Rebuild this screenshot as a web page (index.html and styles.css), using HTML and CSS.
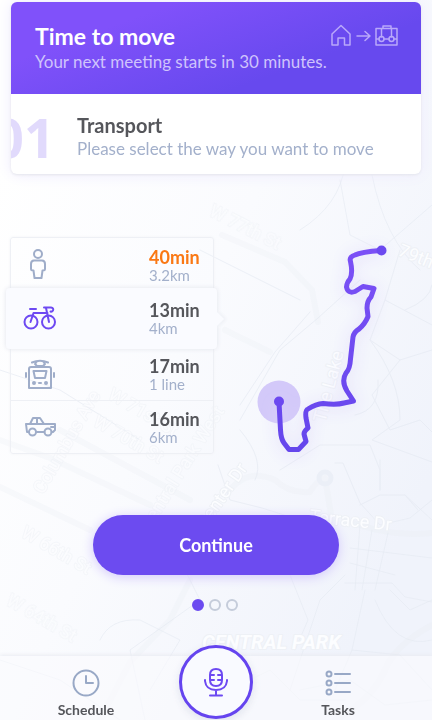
FILE: index.html
```html
<!DOCTYPE html>
<html lang="en">
<head>
<meta charset="utf-8">
<meta name="viewport" content="width=device-width, initial-scale=1">
<title>Time to move</title>
<link rel="stylesheet" href="styles.css">
</head>
<body>
<div class="app">
  <svg class="map" viewBox="0 0 432 720" preserveAspectRatio="xMidYMid slice" aria-hidden="true">
    <g class="roads roads-wide">
      <path d="M222 235L285 262L312 290L318 322M0 440L50 458L150 505M0 487L90 530M60 430L190 500M225 330L270 352M230 490Q248 468 275 480Q290 494 310 492Q315 482 325 478L332 520M345 520Q390 538 432 533M100 720L130 662L170 620L190 580M335 720Q372 700 385 670Q395 645 432 625"/>
    </g>
    <circle class="plaza" cx="325" cy="478" r="6"/>
    <g class="roads">
      <path d="M0 370L60 390L140 440M200 250L300 300M340 180L350 235L380 250L432 205M372 175Q385 240 420 270M300 230Q340 205 345 165M240 420L280 350L318 318L360 280M240 405L275 352L310 312M400 250L385 300L432 325M385 300L370 340L400 360L432 350M400 360L372 395L390 430L420 420L432 432M370 340Q400 380 400 420L372 440L432 462M355 415Q380 410 378 380M405 310Q430 300 432 285M240 430Q265 460 255 480M280 470L320 445L370 445L380 470V490"/>
      <path d="M218 465L230 500L262 508L300 520M335 463H343L360 503L380 525L410 518L432 500M380 460V490M360 505L380 495H405L432 520M405 495L418 510M360 525L355 590M372 530L362 590M388 533L375 590M350 548L432 558M350 563L395 575M345 583H392L405 597L432 602M345 575L320 600L290 690M290 575L308 620L295 650M365 590L352 650L335 690M375 600Q395 650 432 640M352 650L400 655L432 690M390 590L410 610L432 600M300 690L350 680L385 705L432 700M180 560L200 600L130 650L145 720M100 640Q110 618 140 620L180 640L150 690M0 660L60 680L120 720M230 690L270 670L300 700L345 700"/>
    </g>
    <g class="map-text">
      <g class="streets">
        <text transform="translate(208 215) rotate(27)">W 77th St</text>
        <text transform="translate(43 495) rotate(-60)">Columbus Ave</text>
        <text transform="translate(92 425) rotate(30)">W 70th St</text>
        <text transform="translate(107 398) rotate(30)">W 71st St</text>
        <text transform="translate(149 532) rotate(-58)">Central Park West</text>
        <text transform="translate(20 536) rotate(30)">W 66th St</text>
        <text transform="translate(5 604) rotate(30)">W 64th St</text>
      </g>
      <text transform="translate(397 255) rotate(22)">79th St</text>
      <text transform="translate(325 423) rotate(-75)">The Lake</text>
      <text transform="translate(205 530) rotate(-55)">Center Dr</text>
      <text transform="translate(309 522) rotate(6)">Terrace Dr</text>
      <text class="park" x="202" y="649">CENTRAL PARK</text>
    </g>
  </svg>

  <header class="card">
    <div class="banner">
      <div>
        <h1>Time to move</h1>
        <p>Your next meeting starts in 30 minutes.</p>
      </div>
      <svg class="trip" viewBox="0 0 68 24" role="img" aria-label="From home to work">
        <path d="M1 10L10 1.500L19 10V21H13.500V14H7V21H1ZM26 12H39M34 7.500L39 12L34 16.500M45 4.500H66V21H45ZM52 4.500V2H60V4.500M50.500 4.500V13M60.500 4.500V13M45 15H48M53 15H58M63 15H66"/>
        <circle cx="50.500" cy="15" r="2.500"/><circle cx="60.500" cy="15" r="2.500"/>
      </svg>
    </div>
    <div class="step">
      <span class="step-number">01</span>
      <div>
        <h2>Transport</h2>
        <p>Please select the way you want to move</p>
      </div>
    </div>
  </header>

  <main>
    <section class="planner">
      <div class="modes">
        <button class="mode late" type="button">
          <svg viewBox="0 0 34 32"><circle cx="15" cy="5" r="4"/><path d="M11 11.500H19Q22 11.500 22 15V20Q22 21.500 19.500 21.500L18.500 29H11.500L10.500 21.500Q8 21.500 8 20V15Q8 11.500 11 11.500Z"/></svg>
          <span class="figures"><strong>40min</strong><small>3.2km</small></span>
        </button>
        <button class="mode selected" type="button" aria-pressed="true">
          <svg viewBox="0 0 34 32"><circle cx="8" cy="19" r="6.500"/><circle cx="25.500" cy="19" r="6.500"/><path d="M7.500 19L10.500 10H24.500M7 6H13M21 4.500H28Q31 5 30 7.500Q29 9 27.500 8.500M23 5L26 19"/></svg>
          <span class="figures"><strong>13min</strong><small>4km</small></span>
        </button>
        <button class="mode" type="button">
          <svg viewBox="0 0 34 32"><path d="M9 3.500Q17 0 25 3.500M14 2.500L12 5L14 7H20L22 5L20 2.500M8 8H26Q28 8 28 10V29H6V10Q6 8 8 8ZM10.500 12H23.500L22 19H12ZM3 14V18M31 14V18M16 24H18"/><circle cx="11" cy="24" r="1"/><circle cx="23" cy="24" r="1"/></svg>
          <span class="figures"><strong>17min</strong><small>1 line</small></span>
        </button>
        <button class="mode" type="button">
          <svg viewBox="0 0 34 32"><circle cx="9.500" cy="21" r="3.500"/><circle cx="25" cy="21" r="3.500"/><path d="M6 21H4L3 13H7L10 7H17L21 13H32V19L30 21H28.500M13 21H21.500M8 13H21M14 7V13M32 16H28"/></svg>
          <span class="figures"><strong>16min</strong><small>6km</small></span>
        </button>
      </div>
      <svg class="route" viewBox="0 0 192 240" role="img" aria-label="Route on the map">
        <defs><linearGradient id="route-colour" x1="0" y1="0" x2="0" y2="1"><stop offset="0" stop-color="#7b50f6"/><stop offset="1" stop-color="#6546ec"/></linearGradient></defs>
        <circle class="halo" cx="39" cy="172" r="21.500"/>
        <path class="line" d="M39 172L40.500 200Q41 209 44 213L49 219.500H58.500L66 211.500L64 204Q64 201 68 198L66 188Q65 180 68 179Q76 174 83 173.500Q97 175 104 173L113.500 171L107 161Q101 151 106 143Q110 139 110.500 129L113 107Q114 102 119 99Q125 94 128 86.500L127 78Q127 71 131 67L134 58.500L123 56.500L115 61.500Q108 64 106.500 57Q107 52 110 49Q113 43 110.500 31.500Q109 27 115 25Q121 22 141 20.500"/>
        <circle class="stop" cx="39" cy="171.500" r="5"/><circle class="stop" cx="141.500" cy="20.500" r="5"/>
      </svg>
    </section>

    <button class="continue" type="button">Continue</button>
    <div class="dots" role="img" aria-label="Step 1 of 3"><i class="dot current"></i><i class="dot"></i><i class="dot"></i></div>
  </main>

  <nav class="tabs">
    <a href="#schedule" class="tab">
      <svg viewBox="0 0 28 28"><circle cx="14" cy="14" r="12.500"/><path d="M14 7V14H21"/></svg>
      Schedule
    </a>
    <button class="mic" type="button" aria-label="Speak">
      <svg viewBox="0 0 28 32"><path d="M14 3Q20 3 20 9V14Q20 20 14 20Q8 20 8 14V9Q8 3 14 3ZM3 14V15Q4 24 14 24Q24 24 25 15V14M14 24V29.500M8 29.500H20M8 9H12M8 14H12M20 9H16M20 14H16"/></svg>
    </button>
    <a href="#tasks" class="tab">
      <svg viewBox="0 0 28 28"><circle cx="5" cy="5" r="2.500"/><circle cx="5" cy="14" r="2.500"/><circle cx="5" cy="23" r="2.500"/><path d="M11 5H26M11 14H26M11 23H26"/></svg>
      Tasks
    </a>
  </nav>
</div>
</body>
</html>
```
FILE: styles.css
```css
* { box-sizing: border-box; }

body {
  margin: 0;
  font-family: Lato, "Liberation Sans", sans-serif;
  color: #55565b;
}

h1, h2, p { margin: 0; }
button { font: inherit; color: inherit; border: 0; }
svg { fill: none; stroke-linecap: round; stroke-linejoin: round; }

.app {
  position: relative;
  display: flex;
  flex-direction: column;
  min-height: 100vh;
  padding-top: 2px;
  overflow: hidden;
  background: linear-gradient(115deg, #fff 10%, #fafbfe 45%, #f0f3fb 85%);
}

.map { position: absolute; inset: 0; width: 100%; height: 100%; }
.roads { stroke: #e4e9f2; stroke-width: 1; opacity: 0.6; }
.roads-wide { stroke-width: 6; opacity: 0.2; }
.plaza { stroke: #ebeff7; stroke-width: 5; }
.map-text {
  fill: #fcfdff;
  stroke: #eef1f6;
  stroke-width: 2;
  paint-order: stroke;
  font: 18px Roboto, sans-serif;
}
.streets { opacity: 0.5; }
.map-text .park { font-size: 20px; font-style: italic; font-weight: 700; }

.card {
  position: relative;
  margin: 0 11px;
  border-radius: 6px;
  overflow: hidden;
  background: #fff;
  box-shadow: 0 1px 3px #e4e5ec, 0 0 16px #eeebfd;
}

.banner {
  display: flex;
  justify-content: space-between;
  padding: 20px 22px 20px 24px;
  height: 92px;
  color: #fff;
  background: linear-gradient(160deg, #8051fa 25%, #6749ee 70%);
}
.banner h1 { font-size: 23px; line-height: 28px; font-weight: 700; }
.banner p { font-size: 17px; line-height: 24px; color: #cfc3fc; }
.trip { flex: none; width: 68px; height: 24px; margin-top: 2px; stroke: #b9a8fa; stroke-width: 1.5; }

.step { display: flex; align-items: center; height: 80px; padding-top: 6px; }
.step-number {
  flex: none;
  width: 66px;
  margin-left: -18px;
  margin-right: 18px;
  font: 700 54px/56px "Open Sans", sans-serif;
  color: #e1dafc;
}
.step h2 { font-size: 20px; line-height: 24px; font-weight: 700; }
.step p { font-size: 17px; line-height: 24px; color: #a3b0cb; }

main { position: relative; flex: 1; }

.planner {
  display: grid;
  grid-template-columns: 204px 1fr;
  gap: 26px;
  margin: 56px 0 0 10px;
}

.modes {
  align-self: start;
  margin-top: 7px;
  border: 1px solid #eef0f5;
  border-radius: 3px;
  box-shadow: 0 0 3px #f2f3f7;
}
.mode {
  position: relative;
  display: flex;
  align-items: center;
  justify-content: space-between;
  width: 100%;
  height: 52px;
  padding: 0 0 0 12px;
  text-align: left;
  background: none;
  border-bottom: 1px solid #eef0f5;
}
.mode:first-child { padding-top: 4px; height: 50px; }
.mode:first-child, .mode:last-child { border-bottom: 0; }
.mode svg { width: 34px; height: 32px; stroke: #9fadc9; stroke-width: 2; }
.figures { display: flex; flex-direction: column; width: 64px; }
.figures strong { font-size: 18px; line-height: 20px; }
.figures small { font-size: 15px; line-height: 17px; color: #a3b0cb; }
.late strong { color: #fa7814; }

.selected {
  min-width: calc(100% + 9px);
  height: 61px;
  margin: 0 -4px 0 -5px;
  padding: 0 4px 0 17px;
  border: 0;
  border-radius: 4px;
  background: #fafbff;
  box-shadow: 0 0 5px #e2e5ec;
}
.selected::after {
  content: "";
  position: absolute;
  right: -5px;
  top: 26px;
  width: 10px;
  height: 10px;
  background: #fafbff;
  box-shadow: 2px -2px 3px #f0f2f7;
  transform: rotate(45deg);
}
.mode.selected svg { stroke: #6d49f2; }

.route { width: 100%; max-width: 240px; height: auto; overflow: visible; }
.halo { fill: #d3c9f9; }
.line { stroke: url(#route-colour); stroke-width: 5; filter: drop-shadow(0 2px 8px #ded7fc); }
.stop { fill: #6c49f0; }

.continue {
  display: block;
  width: 57%;
  height: 60px;
  margin: 45px auto 0;
  border-radius: 30px;
  font-size: 18px;
  font-weight: 700;
  color: #fff;
  background: #6c4bf0;
  box-shadow: 0 2px 12px #d2c8fb;
}

.dots { display: flex; justify-content: center; gap: 5px; margin: 24px 0 45px; padding-right: 2px; }
.dot { width: 12px; height: 12px; border: 2px solid #c5ccda; border-radius: 50%; }
.dot.current { border-color: #6c4bf0; background: #6c4bf0; }

.tabs {
  position: relative;
  display: grid;
  grid-template-columns: 1fr 74px 1fr;
  height: 64px;
  background: #fafbfea0;
  box-shadow: 0 -1px 4px #e9ebf1;
}
.tab {
  display: flex;
  flex-direction: column;
  align-items: center;
  padding-top: 13px;
  font-size: 14px;
  line-height: 26px;
  font-weight: 700;
  color: #55565b;
  text-decoration: none;
}
.tab:first-child { padding-right: 7px; }
.tab:last-child { padding-right: 9px; }
.tab svg { width: 28px; height: 28px; stroke: #98a8c6; stroke-width: 2; }
.mic {
  display: grid;
  place-items: center;
  width: 74px;
  height: 74px;
  margin-top: -11px;
  padding: 0;
  border: 3px solid #6544ef;
  border-radius: 50%;
  background: #f9faff;
  box-shadow: 0 3px 10px #dfe2ec;
}
.mic svg { width: 28px; height: 32px; stroke: #6d49f2; stroke-width: 2; }
```
